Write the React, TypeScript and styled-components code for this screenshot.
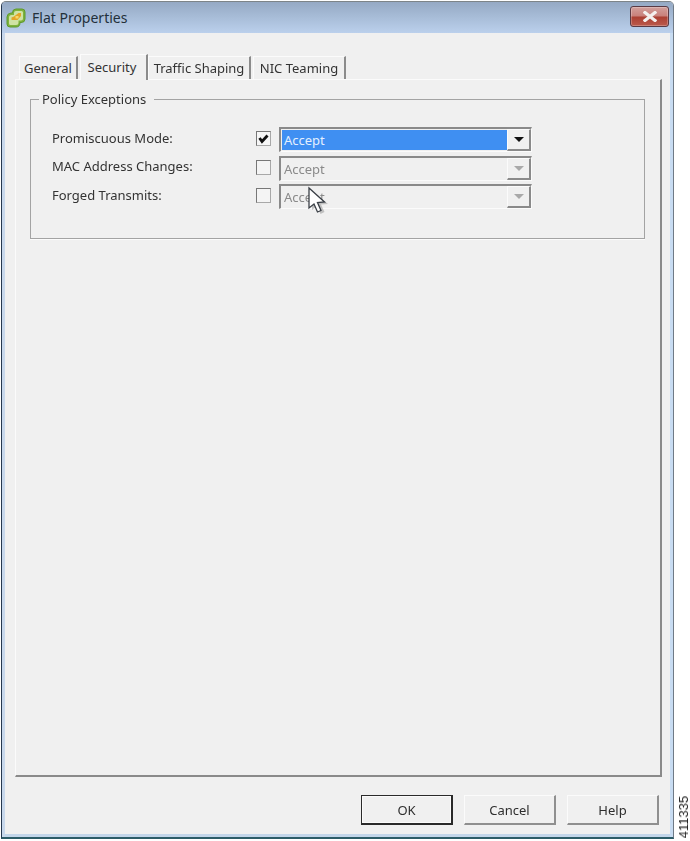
import React from 'react'
import styled, { createGlobalStyle } from 'styled-components'

const GlobalStyles = createGlobalStyle`
  html, body {
    margin: 0;
    padding: 0;
    background: #ffffff;
  }
  body {
    font-family: 'Noto Sans', 'Open Sans', sans-serif;
    font-size: 13px;
    color: #2e2e2e;
  }
`

// the reference is a slightly soft scan, so the whole page gets a touch of blur
const Page = styled.div`
  display: flex;
  width: 690px;
  height: 841px;
  padding: 1px 0 0 1px;
  box-sizing: border-box;
  overflow: hidden;
  filter: blur(0.35px);
`

const Window = styled.div`
  width: 673px;
  height: 838px;
  flex: none;
  box-sizing: border-box;
  display: flex;
  flex-direction: column;
  background: #f0f0f0;
  border: 1px solid #6f7a86;
  border-top-color: #7d8488;
  border-left-color: #26384f;
  border-bottom: 2px solid #2c5c68;
  border-radius: 5px 5px 0 0;
  box-shadow: inset 3px 0 0 #c8d8ec, inset -3px 0 0 #c8dcf2, inset 0 -3px 0 #c3d6ea;
`

const SideLabel = styled.div`
  align-self: flex-end;
  writing-mode: vertical-rl;
  transform: rotate(180deg);
  font-family: 'Liberation Sans', Arial, sans-serif;
  font-size: 13px;
  line-height: 12px;
  color: #222222;
  margin: 0 0 3px 4px;
`

const TitleBar = styled.div`
  height: 31px;
  flex: none;
  display: flex;
  align-items: center;
  padding: 0 4px 0 4px;
  border-radius: 4px 4px 0 0;
  background: linear-gradient(180deg, #95a9c4 0%, #a6bbd6 45%, #bbd0ec 100%);
`

const Title = styled.span`
  font-size: 14px;
  margin-left: 6px;
  color: #23303a;
  flex: 1;
`

const CloseButton = styled.div`
  width: 39px;
  height: 21px;
  margin-top: -2px;
  display: flex;
  align-items: center;
  justify-content: center;
  box-sizing: border-box;
  border: 1px solid #5a3a44;
  border-radius: 3px;
  background: linear-gradient(180deg, #d2a09c 0%, #c9807a 48%, #ab3f32 52%, #bb5a4c 100%);
  box-shadow: inset 0 0 0 1px rgba(255, 255, 255, 0.25);
`

const Body = styled.div`
  flex: 1;
  display: flex;
  flex-direction: column;
  padding: 20px 11px 0 13px;
  min-height: 0;
`

const TabRow = styled.div`
  display: flex;
  align-items: flex-end;
  height: 26px;
  flex: none;
  padding-left: 4px;
`

const Tab = styled.div<{ $active?: boolean; $width: number }>`
  width: ${p => p.$width}px;
  height: ${p => (p.$active ? 26 : 23)}px;
  box-sizing: border-box;
  display: flex;
  align-items: ${p => (p.$active ? 'flex-start' : 'center')};
  justify-content: center;
  padding-top: ${p => (p.$active ? 2 : 0)}px;
  padding-right: ${p => (p.$active ? 3 : 0)}px;
  line-height: 20px;
  color: #333333;
  border-top: 1px solid #fbfbfb;
  border-left: 1px solid #fbfbfb;
  border-right: 2px solid #8b8b8b;
  margin-right: ${p => (p.$active ? 0 : 2)}px;
  position: relative;
  z-index: ${p => (p.$active ? 1 : 0)};
  margin-bottom: ${p => (p.$active ? -1 : 0)}px;
  background: #f0f0f0;
`

const Panel = styled.div`
  height: 698px;
  flex: none;
  box-sizing: border-box;
  padding: 10px 15px 0 14px;
  border-top: 1px solid #fbfbfb;
  border-left: 1px solid #fbfbfb;
  border-right: 2px solid #8a8a8a;
  border-bottom: 2px solid #8a8a8a;
`

const Group = styled.fieldset`
  margin: 0;
  padding: 19px 0 0 21px;
  height: 149px;
  box-sizing: border-box;
  border: 1px solid #a3a3a3;
  box-shadow: 0 1px 0 #fbfbfb;
  min-width: 0;
`

const GroupTitle = styled.legend`
  padding: 0 8px 0 3px;
  margin-left: -13px;
  line-height: 18px;
  color: #333333;
`

const Rows = styled.div`
  display: grid;
  grid-template-columns: 204px 23px 253px;
  grid-auto-rows: 25px;
  row-gap: 3.5px;
  align-items: center;
`

const RowLabel = styled.div`
  padding-bottom: 4px;
  color: #333333;
`

const CheckBox = styled.div<{ $checked?: boolean }>`
  width: 15px;
  height: 15px;
  box-sizing: border-box;
  display: flex;
  align-items: center;
  justify-content: center;
  background: ${p => (p.$checked ? '#f6f6f6' : '#f4f4f4')};
  border: 1px solid #a8a8a8;
  border-top-color: #777777;
  border-left-color: #777777;
  margin-bottom: 2px;
`

const Combo = styled.div<{ $enabled?: boolean }>`
  height: 25px;
  box-sizing: border-box;
  display: flex;
  position: relative;
  border-top: 2px solid #8a8a8a;
  border-left: 2px solid #8a8a8a;
  border-right: 1px solid #fbfbfb;
  border-bottom: 1px solid #fbfbfb;
  color: ${p => (p.$enabled ? '#e4efff' : '#8a8a8a')};
`

const ComboValue = styled.div<{ $selected?: boolean }>`
  flex: 1;
  margin: 1px 0 1px 1px;
  padding-left: 2px;
  line-height: 20px;
  background: ${p => (p.$selected ? '#3f8ff2' : 'transparent')};
`

const ArrowButton = styled.div`
  width: 24px;
  flex: none;
  box-sizing: border-box;
  display: flex;
  align-items: center;
  justify-content: center;
  border-left: 1px solid #fbfbfb;
  border-top: 1px solid #fbfbfb;
  border-right: 2px solid #8a8a8a;
  border-bottom: 2px solid #8a8a8a;
`

const Arrow = styled.div<{ $enabled?: boolean }>`
  width: 0;
  height: 0;
  border-left: 5px solid transparent;
  border-right: 5px solid transparent;
  border-top: 5px solid ${p => (p.$enabled ? '#111111' : '#a9a9a9')};
`

const Cursor = styled.svg`
  position: absolute;
  left: 25px;
  top: 0;
  width: 26px;
  height: 30px;
`

const Footer = styled.div`
  display: flex;
  justify-content: flex-end;
  gap: 11px;
  padding: 18px 3px 0 0;
`

const Button = styled.div<{ $primary?: boolean }>`
  width: 92px;
  height: 30px;
  box-sizing: border-box;
  display: flex;
  align-items: center;
  justify-content: center;
  color: #2e2e2e;
  background: #f0f0f0;
  border-top: ${p => (p.$primary ? '1px solid #2a2a2a' : '1px solid #fbfbfb')};
  border-left: ${p => (p.$primary ? '1px solid #2a2a2a' : '1px solid #fbfbfb')};
  border-right: 2px solid ${p => (p.$primary ? '#2a2a2a' : '#8f8f8f')};
  border-bottom: 2px solid ${p => (p.$primary ? '#2a2a2a' : '#8f8f8f')};
  box-shadow: ${p => (p.$primary ? 'inset 0 0 0 1px #fbfbfb' : 'none')};
`

const AppIcon = () => (
  <svg width="20" height="20" viewBox="0 0 20 20">
    <path d="M6.5 5 Q6.5 1 10 1 H16 Q19 1 19 4 V11 Q19 14.5 15 14.5 H14 Q14 19 10 19 H4 Q1 19 1 16 V9 Q1 5.5 5 5 Z" fill="#7fb33c" stroke="#5d9a2c" strokeWidth="1" />
    <path d="M8 7 V5 Q8 3 10 3 H15.5 Q17 3 17 4.5 V10.5 Q17 12.5 15 12.5 H12.5 V14.5 Q12.5 17 10 17 H4.5 Q3 17 3 15.5 V9.5 Q3 7 5.5 7 Z" fill="#cfe3a4" />
    <path d="M8 8.5 L12.5 5 H15 V8 L11.5 12 H5.5 V9.5 Z" fill="#e3a526" />
    <path d="M9.5 8 H12.5 V10.5 H9.5 Z" fill="#f6d76a" />
  </svg>
)

const CloseGlyph = () => (
  <svg width="14" height="11" viewBox="0 0 14 11">
    <path d="M2 1.5 L12 9.5 M12 1.5 L2 9.5" stroke="#f4f0ee" strokeWidth="3.2" strokeLinecap="square" fill="none" />
  </svg>
)

const CheckGlyph = () => (
  <svg width="11" height="10" viewBox="0 0 11 10">
    <path d="M1.5 4 L4 7.5 L9.5 1.5" stroke="#111111" strokeWidth="2.8" fill="none" />
  </svg>
)

const rows = [
  { label: 'Promiscuous Mode:', enabled: true },
  { label: 'MAC Address Changes:', enabled: false },
  { label: 'Forged Transmits:', enabled: false, cursor: true },
]

const tabs = [
  { label: 'General', width: 59 },
  { label: 'Security', width: 68 },
  { label: 'Traffic Shaping', width: 103 },
  { label: 'NIC Teaming', width: 93 },
]

export default function App() {
  return (
    <>
      <GlobalStyles />
      <Page>
        <Window>
          <TitleBar>
            <AppIcon />
            <Title>Flat Properties</Title>
            <CloseButton>
              <CloseGlyph />
            </CloseButton>
          </TitleBar>
          <Body>
            <TabRow>
              {tabs.map(t => (
                <Tab key={t.label} $active={t.label === 'Security'} $width={t.width}>
                  {t.label}
                </Tab>
              ))}
            </TabRow>
            <Panel>
              <Group>
                <GroupTitle>Policy Exceptions</GroupTitle>
                <Rows>
                  {rows.map(r => (
                    <React.Fragment key={r.label}>
                      <RowLabel>{r.label}</RowLabel>
                      <CheckBox $checked={r.enabled}>{r.enabled && <CheckGlyph />}</CheckBox>
                      <Combo $enabled={r.enabled}>
                        <ComboValue $selected={r.enabled}>Accept</ComboValue>
                        <ArrowButton>
                          <Arrow $enabled={r.enabled} />
                        </ArrowButton>
                        {r.cursor && (
                          <Cursor viewBox="0 0 26 30">
                            <path d="M4 4 L4 23 L9 19 L12.5 27 L16.5 25 L13 17.5 L20 17 Z" fill="#666666" opacity="0.35" transform="translate(2 1)" />
                            <path d="M3 2 L3 22 L8 18 L11.5 26 L15 24.5 L11.5 16.5 L18.5 16 Z" fill="#ffffff" stroke="#3a3f46" strokeWidth="1.3" />
                          </Cursor>
                        )}
                      </Combo>
                    </React.Fragment>
                  ))}
                </Rows>
              </Group>
            </Panel>
            <Footer>
              <Button $primary>OK</Button>
              <Button>Cancel</Button>
              <Button>Help</Button>
            </Footer>
          </Body>
        </Window>
        <SideLabel>411335</SideLabel>
      </Page>
    </>
  )
}
